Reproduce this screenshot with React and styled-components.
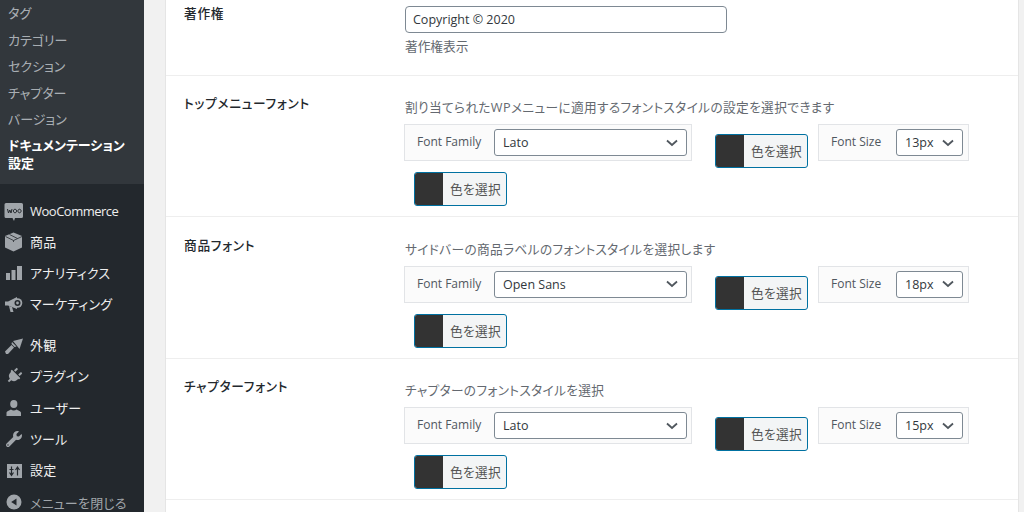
import React from "react";
import styled, { createGlobalStyle } from "styled-components";
import { FaPlug, FaWrench } from "react-icons/fa";

const GlobalStyle = createGlobalStyle`
  html, body {
    margin: 0;
    height: 512px;
    overflow: hidden;
    background: #f1f1f1;
    font-family: "Open Sans", "Noto Sans CJK JP", sans-serif;
    font-feature-settings: "palt" 1;
  }
  * { box-sizing: border-box; }
`;

const subItems = ["タグ", "カテゴリー", "セクション", "チャプター", "バージョン"];

const WooIcon = () => (
  <svg width="20" height="20" viewBox="0 0 20 20">
    <path d="M2 2h15.500a1.500 1.500 0 0 1 1.500 1.500v12a1.500 1.500 0 0 1-1.500 1.500h-6.500l-1 3-1.500-3H2a1.500 1.500 0 0 1-1.500-1.500v-12A1.500 1.500 0 0 1 2 2z" fill="#a0a5aa" />
    <path d="M3.500 8l1 4 1.300-3 1.200 3 1-4M11 8.200a1.600 1.800 0 1 0 .01 0M15.500 8.200a1.600 1.800 0 1 0 .01 0" fill="none" stroke="#23282d" strokeWidth="1" />
  </svg>
);

const BoxIcon = () => (
  <svg width="20" height="20" viewBox="0 0 20 20">
    <path d="M9.500.5L18 4v11.500l-8.500 4-8.500-4V4z" fill="#a0a5aa" />
    <path d="M1.500 4.500L9.500 8.500 18 4.500M9.500 8.500V10M5.500 2.500l8 4" fill="none" stroke="#23282d" strokeWidth=".8" />
  </svg>
);

const BarsIcon = () => (
  <svg width="20" height="20" viewBox="0 0 20 20" fill="#a0a5aa">
    <rect x="2" y="10" width="4" height="7" />
    <rect x="7.500" y="7" width="4" height="10" />
    <rect x="13" y="3" width="5" height="14" />
  </svg>
);

const MegaphoneIcon = () => (
  <svg width="20" height="20" viewBox="0 0 20 20">
    <path d="M1 7.500h3L13 3v12L4 11.500H1z" fill="#a0a5aa" />
    <path d="M5 12l3 1 1.500 5H6.500z" fill="#a0a5aa" />
    <circle cx="13.500" cy="9" r="4.800" fill="#a0a5aa" />
    <circle cx="13.500" cy="9" r="3" fill="#23282d" />
    <circle cx="13.500" cy="9" r="1.400" fill="#a0a5aa" />
  </svg>
);

const BrushIcon = () => (
  <svg width="20" height="20" viewBox="0 0 20 20" fill="#a0a5aa">
    <path d="M1 16.500L7.500 10l2.500 2.500-6 6.500H2z" />
    <path d="M8 7l-.5 2 3 3 2-.5z" />
    <path d="M9 6l10-2.500L15.500 14z" />
  </svg>
);

const UserIcon = () => (
  <svg width="20" height="20" viewBox="0 0 20 20" fill="#a0a5aa">
    <ellipse cx="9.800" cy="7" rx="3.600" ry="4" />
    <path d="M2.500 19v-3c0-2 3-2.500 4.500-3.500 1.500 1.200 4 1.200 5.500 0 1.500 1 4.500 1.500 4.500 3.500v3z" />
  </svg>
);

const SettingsIcon = () => (
  <svg width="20" height="20" viewBox="0 0 20 20">
    <rect x="3" y="4" width="15" height="14" fill="#a0a5aa" />
    <path d="M7.500 6.500v9M5.500 12.500l2 3 2-3M13.500 15.500V7M11.500 10l2-3 2 3M5.500 9.500h4" fill="none" stroke="#23282d" strokeWidth="1.200" />
  </svg>
);

const CollapseIcon = () => (
  <svg width="20" height="20" viewBox="0 0 20 20">
    <circle cx="10" cy="10" r="7.500" fill="#a0a5aa" />
    <path d="M12.500 6.500v7L7.200 10z" fill="#23282d" />
  </svg>
);

const mainGroups = [
  [
    { label: "WooCommerce", icon: <WooIcon />, latin: true },
    { label: "商品", icon: <BoxIcon /> },
    { label: "アナリティクス", icon: <BarsIcon /> },
    { label: "マーケティング", icon: <MegaphoneIcon /> },
  ],
  [
    { label: "外観", icon: <BrushIcon /> },
    { label: "プラグイン", icon: <FaPlug size={16} color="#a0a5aa" style={{ transform: "rotate(45deg)" }} /> },
    { label: "ユーザー", icon: <UserIcon /> },
    { label: "ツール", icon: <FaWrench size={16} color="#a0a5aa" /> },
    { label: "設定", icon: <SettingsIcon /> },
  ],
];

const fontRows = [
  { title: "トップメニューフォント", desc: "割り当てられたWPメニューに適用するフォントスタイルの設定を選択できます", family: "Lato", size: "13px" },
  { title: "商品フォント", desc: "サイドバーの商品ラベルのフォントスタイルを選択します", family: "Open Sans", size: "18px" },
  { title: "チャプターフォント", desc: "チャプターのフォントスタイルを選択", family: "Lato", size: "15px" },
];

const Chevron = () => (
  <svg width="12" height="8" viewBox="0 0 12 8">
    <path d="M1 1.500l5 4.500 5-4.500" fill="none" stroke="#50575e" strokeWidth="1.800" />
  </svg>
);

function ColorPicker({ $first }) {
  return (
    <ColorButton $first={$first}>
      <Swatch />
      <ColorLabel>色を選択</ColorLabel>
    </ColorButton>
  );
}

export default function App() {
  return (
    <>
      <GlobalStyle />
      <Page>
        <Sidebar>
          <SubMenu>
            {subItems.map((item) => (
              <SubItem key={item}>{item}</SubItem>
            ))}
            <SubItemCurrent>ドキュメンテーション<br />設定</SubItemCurrent>
          </SubMenu>
          {mainGroups.map((group, i) => (
            <MenuGroup key={i}>
              {group.map((item) => (
                <MenuItem key={item.label} $latin={item.latin}>
                  <MenuIcon>{item.icon}</MenuIcon>
                  {item.label}
                </MenuItem>
              ))}
            </MenuGroup>
          ))}
          <CollapseItem>
            <MenuIcon><CollapseIcon /></MenuIcon>
            メニューを閉じる
          </CollapseItem>
        </Sidebar>
        <Content>
          <Card>
            <CopyrightRow>
              <RowTitle>著作権</RowTitle>
              <Field>
                <TextInput>Copyright © 2020</TextInput>
                <HelpText>著作権表示</HelpText>
              </Field>
            </CopyrightRow>
            {fontRows.map((row) => (
              <FontRow key={row.title}>
                <RowTitle>{row.title}</RowTitle>
                <Field>
                  <Description>{row.desc}</Description>
                  <Controls>
                    <ControlBox $width={288} $right={4}>
                      <ControlLabel>Font Family</ControlLabel>
                      <SelectBox $width={193}>
                        {row.family}
                        <Chevron />
                      </SelectBox>
                    </ControlBox>
                    <ColorPicker $first />
                    <ControlBox $width={151} $left={10} $right={5}>
                      <ControlLabel>Font Size</ControlLabel>
                      <SelectBox $width={67}>
                        {row.size}
                        <Chevron />
                      </SelectBox>
                    </ControlBox>
                    <ColorPicker />
                  </Controls>
                </Field>
              </FontRow>
            ))}
          </Card>
        </Content>
      </Page>
    </>
  );
}

const Page = styled.div`
  display: flex;
  width: 1024px;
  height: 512px;
  overflow: hidden;
`;

const Sidebar = styled.nav`
  flex: 0 0 144px;
  background: #23282d;
  overflow: hidden;
`;

const SubMenu = styled.div`
  background: #32373c;
  height: 184px;
  padding-top: 1.400px;
  margin-bottom: 11px;
`;

const SubItem = styled.div`
  height: 26.400px;
  line-height: 24px;
  padding-left: 8px;
  font-size: 13px;
  color: rgba(240, 245, 250, 0.65);
  white-space: nowrap;
`;

const SubItemCurrent = styled.div`
  padding: 3px 8px 0;
  font-size: 13px;
  font-weight: 700;
  line-height: 18px;
  color: #fff;
  white-space: nowrap;
`;

const MenuItem = styled.div`
  display: flex;
  align-items: center;
  height: 31px;
  font-size: 13px;
  letter-spacing: ${(p) => (p.$latin ? "-0.5px" : "0.2px")};
  color: #eee;
  white-space: nowrap;
`;

const MenuGroup = styled.div`
  margin-bottom: 10px;

  & + & {
    margin-bottom: 0;
  }

  & + & > ${MenuItem} {
    height: 31.300px;
  }
`;

const CollapseItem = styled(MenuItem)`
  color: #a0a5aa;
  height: 34px;
`;

const MenuIcon = styled.span`
  flex: 0 0 30px;
  display: flex;
  justify-content: center;
  align-items: center;
  padding: 0 6px 0 4px;
`;

const Content = styled.main`
  flex: 1;
  padding: 0 5px 0 21px;
  min-width: 0;
`;

const Card = styled.section`
  background: #fff;
  border-left: 1px solid #e5e5e5;
  border-right: 1px solid #e5e5e5;
  height: 512px;
`;

const Row = styled.div`
  display: flex;
  border-bottom: 1px solid #eee;
`;

const CopyrightRow = styled(Row)`
  height: 76px;
  padding-top: 5px;
`;

const FontRow = styled(Row)`
  height: 141.400px;
  padding-top: 19.300px;
`;

const RowTitle = styled.div`
  flex: 0 0 238px;
  padding-left: 18px;
  font-size: 12.700px;
  line-height: 17px;
  font-weight: 500;
  letter-spacing: 0.7px;
  color: #23282d;
  white-space: nowrap;
`;

const Field = styled.div`
  flex: 1;
  min-width: 0;
`;

const TextInput = styled.div`
  width: 322px;
  height: 27px;
  margin: 1px 0 0 1px;
  padding: 0 7px;
  border: 1px solid #7e8993;
  border-radius: 4px;
  font-size: 12.500px;
  line-height: 25px;
  color: #32373c;
`;

const HelpText = styled.div`
  margin: 4px 0 0 1px;
  font-size: 12.700px;
  line-height: 18px;
  color: #646970;
`;

const Description = styled.div`
  height: 18px;
  margin: 3px 0 8px 1px;
  font-size: 12.700px;
  line-height: 18px;
  letter-spacing: 0.35px;
  color: #646970;
  white-space: nowrap;
`;

const Controls = styled.div`
  display: flex;
  flex-wrap: wrap;
  align-items: flex-start;
  width: 580px;
`;

const ControlBox = styled.div`
  display: flex;
  align-items: center;
  justify-content: space-between;
  width: ${(p) => p.$width}px;
  height: 37px;
  margin-left: ${(p) => p.$left || 0}px;
  padding: 0 ${(p) => p.$right}px 0 12px;
  background: #fbfbfb;
  border: 1px solid #e2e4e7;
`;

const ControlLabel = styled.span`
  margin-top: -2px;
  font-size: 12px;
  color: #50575e;
  white-space: nowrap;
`;

const SelectBox = styled.div`
  display: flex;
  align-items: center;
  justify-content: space-between;
  width: ${(p) => p.$width}px;
  height: 27px;
  padding: 0 8px;
  background: #fff;
  border: 1px solid #7e8993;
  border-radius: 3px;
  font-size: 12.500px;
  color: #32373c;
`;

const ColorButton = styled.div`
  display: flex;
  width: 93px;
  height: 34px;
  margin: ${(p) => (p.$first ? "10px 0 0 23px" : "4px 0 0 10px")};
  border: 1px solid #0071a1;
  border-radius: 3px;
  background: #f3f5f6;
  overflow: hidden;
`;

const Swatch = styled.span`
  flex: 0 0 28px;
  background: #333;
`;

const ColorLabel = styled.span`
  flex: 1;
  padding-left: 7px;
  font-size: 12.700px;
  line-height: 33px;
  letter-spacing: 0.3px;
  color: #555;
  white-space: nowrap;
`;
